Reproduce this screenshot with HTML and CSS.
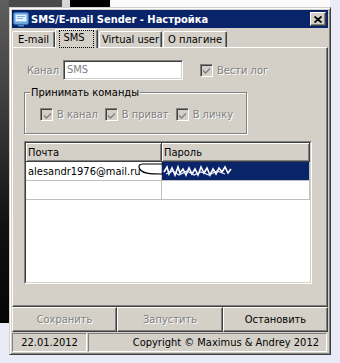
FILE: index.html
```html
<!doctype html>
<html lang="ru">
  <head>
    <meta charset="utf-8">
    <title>SMS/E-mail Sender - Настройка</title>
    <link rel="stylesheet" href="styles.css">
  </head>
  <body>
    <div class="window">
      <div class="titlebar">
        <svg class="app-icon" width="16" height="16" viewBox="0 0 16 16">
          <rect x="0.5" y="1.5" width="15" height="12" rx="2" fill="#6fa6dc" stroke="#2f6fb0"/>
          <rect x="2.5" y="3.5" width="11" height="7" rx="1" fill="#e6f3ff" stroke="#9cc8ee"/>
          <path d="M4 5.5h8M4 7.5h6" stroke="#7fb2e0" stroke-width="1"/>
          <rect x="5" y="14" width="6" height="1.5" fill="#4f8cc9"/>
        </svg>
        <span class="title">SMS/E-mail Sender - Настройка</span>
        <div class="close-btn">
          <svg width="8" height="7" viewBox="0 0 8 7">
            <path d="M0.5 0.5L7.5 6.5M7.5 0.5L0.5 6.5" stroke="#000" stroke-width="1.8"/>
          </svg>
        </div>
      </div>

      <div class="tabs">
        <div class="tab tab-email">E-mail</div>
        <div class="tab tab-sms active"><span class="focus">SMS</span></div>
        <div class="tab tab-virtual">Virtual user</div>
        <div class="tab tab-about">О плагине</div>
      </div>

      <div class="panel">
        <div class="channel-row">
          <span class="label disabled">Канал</span>
          <div class="edit">SMS</div>
          <label class="check check-log">
            <span class="box"><svg width="7" height="7" viewBox="0 0 7 7"><path d="M0 2.5L2.5 5L7 0.5V2.5L2.5 7L0 4.5Z" fill="#808080"/></svg></span>
            <span class="disabled">Вести лог</span>
          </label>
        </div>

        <div class="group">
          <span class="legend">Принимать команды</span>
          <div class="group-checks">
            <label class="check">
              <span class="box"><svg width="7" height="7" viewBox="0 0 7 7"><path d="M0 2.5L2.5 5L7 0.5V2.5L2.5 7L0 4.5Z" fill="#808080"/></svg></span>
              <span class="disabled">В канал</span>
            </label>
            <label class="check">
              <span class="box"><svg width="7" height="7" viewBox="0 0 7 7"><path d="M0 2.5L2.5 5L7 0.5V2.5L2.5 7L0 4.5Z" fill="#808080"/></svg></span>
              <span class="disabled">В приват</span>
            </label>
            <label class="check">
              <span class="box"><svg width="7" height="7" viewBox="0 0 7 7"><path d="M0 2.5L2.5 5L7 0.5V2.5L2.5 7L0 4.5Z" fill="#808080"/></svg></span>
              <span class="disabled">В личку</span>
            </label>
          </div>
        </div>

        <div class="grid-outer">
          <div class="grid">
            <div class="cell head">Почта</div>
            <div class="cell head">Пароль</div>
            <div class="cell">alesandr1976@mail.ru</div>
            <div class="cell selected">
              <svg class="scribble" width="70" height="16" viewBox="0 0 70 16">
                <path d="M1 9L4 4L6 11L9 5L12 12L15 4L17 10L20 6L23 12L26 5L29 11L32 6L35 12L38 4L41 10L44 5L47 12L50 6L53 11L56 5L59 9L62 4L65 10L68 6"
                      fill="none" stroke="#fff" stroke-width="1.6"/>
                <path d="M3 11L10 8L16 12L24 8L31 12L38 9L46 12L54 8L62 11" fill="none" stroke="#e8ecff" stroke-width="1.2"/>
              </svg>
            </div>
            <div class="cell"></div>
            <div class="cell"></div>
            <svg class="pen-mark" width="26" height="14" viewBox="0 0 26 14">
              <path d="M25 2H5C0.5 2 0 5 2.5 8C5 11 10 12 25 12" fill="none" stroke="#000" stroke-width="1.2"/>
            </svg>
          </div>
        </div>
      </div>

      <div class="buttons">
        <div class="btn disabled">Сохранить</div>
        <div class="btn disabled">Запустить</div>
        <div class="btn">Остановить</div>
      </div>

      <div class="statusbar">
        <div class="status-panel date">22.01.2012</div>
        <div class="status-panel copyright">Copyright © Maximus &amp; Andrey 2012</div>
      </div>
    </div>
  </body>
</html>
```

FILE: styles.css
```css
body {
  margin: 0;
  width: 340px;
  height: 363px;
  overflow: hidden;
  font-family: "DejaVu Sans Condensed", "Liberation Sans", sans-serif;
  font-size: 11px;
  color: #000;
  background-color: #e9ecf6;
  background-image:
    linear-gradient(#5e5e5e, #3a3a3a 35%, #111 70%, #050505),
    linear-gradient(#4a4a4a, #4a4a4a),
    linear-gradient(#d6d6d6, #d6d6d6),
    linear-gradient(#000, #000),
    linear-gradient(#fbfbfb, #fbfbfb);
  background-size: 9px 323px, 62px 7px, 8px 7px, 40px 7px, 220px 7px;
  background-position: 0 0, 0 0, 62px 0, 70px 0, 110px 0;
  background-repeat: no-repeat;
}

.window {
  margin: 7px 0 0 9px;
  width: 322px;
  height: 348px;
  box-sizing: border-box;
  padding: 2px;
  background: #d4d0c8;
  border: 1px solid;
  border-color: #d4d0c8 #404040 #404040 #d4d0c8;
  box-shadow: inset 1px 1px #fff, inset -1px -1px #808080;
  display: flex;
  flex-direction: column;
}

/* Title bar */
.titlebar {
  height: 18px;
  background: #0a246a;
  display: flex;
  align-items: center;
  padding: 0 2px 0 1px;
}

.app-icon {
  flex: none;
}

.title {
  margin-left: 2px;
  color: #fff;
  font-weight: bold;
  flex: 1;
  white-space: nowrap;
}

.close-btn {
  width: 16px;
  height: 14px;
  box-sizing: border-box;
  background: #d4d0c8;
  border: 1px solid;
  border-color: #fff #404040 #404040 #fff;
  box-shadow: inset -1px -1px #808080;
  display: flex;
  align-items: center;
  justify-content: center;
  padding-right: 1px;
}

/* Tabs */
.tabs {
  height: 18px;
  margin-top: 1px;
  display: flex;
  align-items: flex-end;
  position: relative;
  z-index: 1;
}

.tab {
  height: 16px;
  box-sizing: border-box;
  border: 1px solid;
  border-color: #fff #404040 transparent #fff;
  border-bottom: none;
  border-radius: 2px 2px 0 0;
  box-shadow: inset -1px 0 #808080;
  display: flex;
  align-items: center;
  justify-content: center;
  white-space: nowrap;
}

.tab-email { width: 43px; }
.tab-sms { width: 43px; }
.tab-virtual { width: 63px; margin-left: 1px; }
.tab-about { width: 64px; margin-left: 1px; }

.tab.active {
  height: 19px;
  margin-bottom: -1px;
  background: #d4d0c8;
  align-items: flex-start;
  padding-top: 1px;
}

.focus {
  outline: 1px dotted #000;
  padding: 0 8px 2px 3px;
  line-height: 14px;
}

/* Page panel */
.panel {
  height: 260px;
  box-sizing: border-box;
  border: 1px solid;
  border-color: #fff #404040 #404040 #fff;
  box-shadow: inset -1px -1px #808080;
  padding: 12px 0 0 11px;
  display: flex;
  flex-direction: column;
  align-items: flex-start;
}

.disabled {
  color: #808080;
  text-shadow: 1px 1px 0 #fff;
}

.channel-row {
  display: flex;
  align-items: center;
  height: 20px;
}

.label {
  margin-left: 3px;
  margin-right: 4px;
}

.edit {
  width: 120px;
  height: 20px;
  box-sizing: border-box;
  background: #fff;
  color: #808080;
  border: 1px solid;
  border-color: #808080 #fff #fff #808080;
  box-shadow: inset 1px 1px #404040, inset -1px -1px #d4d0c8;
  padding: 2px 0 0 3px;
  line-height: 14px;
}

.check {
  display: flex;
  align-items: center;
  gap: 4px;
  white-space: nowrap;
}

.check-log {
  margin-left: 17px;
}

.box {
  width: 13px;
  height: 13px;
  box-sizing: border-box;
  background: #d4d0c8;
  border: 1px solid;
  border-color: #808080 #fff #fff #808080;
  box-shadow: inset 1px 1px #404040, inset -1px -1px #d4d0c8;
  display: flex;
  align-items: center;
  justify-content: center;
  padding: 1px 0 0 1px;
}

/* Group box */
.group {
  position: relative;
  margin-top: 12px;
  width: 223px;
  height: 42px;
  box-sizing: border-box;
  border: 1px solid #808080;
  box-shadow: inset 1px 1px #fff, 1px 1px #fff;
  padding: 15px 0 0 15px;
}

.legend {
  position: absolute;
  top: -7px;
  left: 5px;
  padding: 0 1px;
  background: #d4d0c8;
  line-height: 13px;
}

.group-checks {
  display: flex;
  gap: 7px;
}

/* String grid */
.grid-outer {
  margin-top: 7px;
  width: 288px;
  height: 143px;
  box-sizing: border-box;
  border: 1px solid;
  border-color: #808080 #fff #fff #808080;
}

.grid {
  position: relative;
  height: 100%;
  box-sizing: border-box;
  background: #fff;
  border: 1px solid;
  border-color: #404040 #d4d0c8 #d4d0c8 #404040;
  display: grid;
  grid-template-columns: 136px 148px;
  grid-auto-rows: 19px;
  align-content: start;
}

.cell {
  box-sizing: border-box;
  border-right: 1px solid #c0c0c0;
  border-bottom: 1px solid #c0c0c0;
  padding: 0 2px;
  display: flex;
  align-items: center;
  white-space: nowrap;
}

.cell.head {
  background: #d4d0c8;
  border-color: #404040;
  box-shadow: inset 1px 1px #fff, inset -1px -1px #808080;
}

.cell.selected {
  background: #0a246a;
  padding-left: 1px;
}

.pen-mark {
  position: absolute;
  left: 112px;
  top: 19px;
}

/* Bottom buttons */
.buttons {
  height: 25px;
  display: grid;
  grid-template-columns: 105px 106px 105px;
}

.btn {
  box-sizing: border-box;
  border: 1px solid;
  border-color: #fff #404040 #404040 #fff;
  box-shadow: inset -1px -1px #808080;
  display: flex;
  align-items: center;
  justify-content: center;
  padding-bottom: 1px;
}

/* Status bar */
.statusbar {
  height: 19px;
  margin-top: 1px;
  display: flex;
  gap: 1px;
}

.status-panel {
  box-sizing: border-box;
  border: 1px solid;
  border-color: #808080 #fff #fff #808080;
  display: flex;
  align-items: center;
}

.date {
  width: 75px;
  justify-content: center;
}

.copyright {
  flex: 1;
  justify-content: flex-end;
  padding-right: 7px;
  margin-right: 1px;
}
```
